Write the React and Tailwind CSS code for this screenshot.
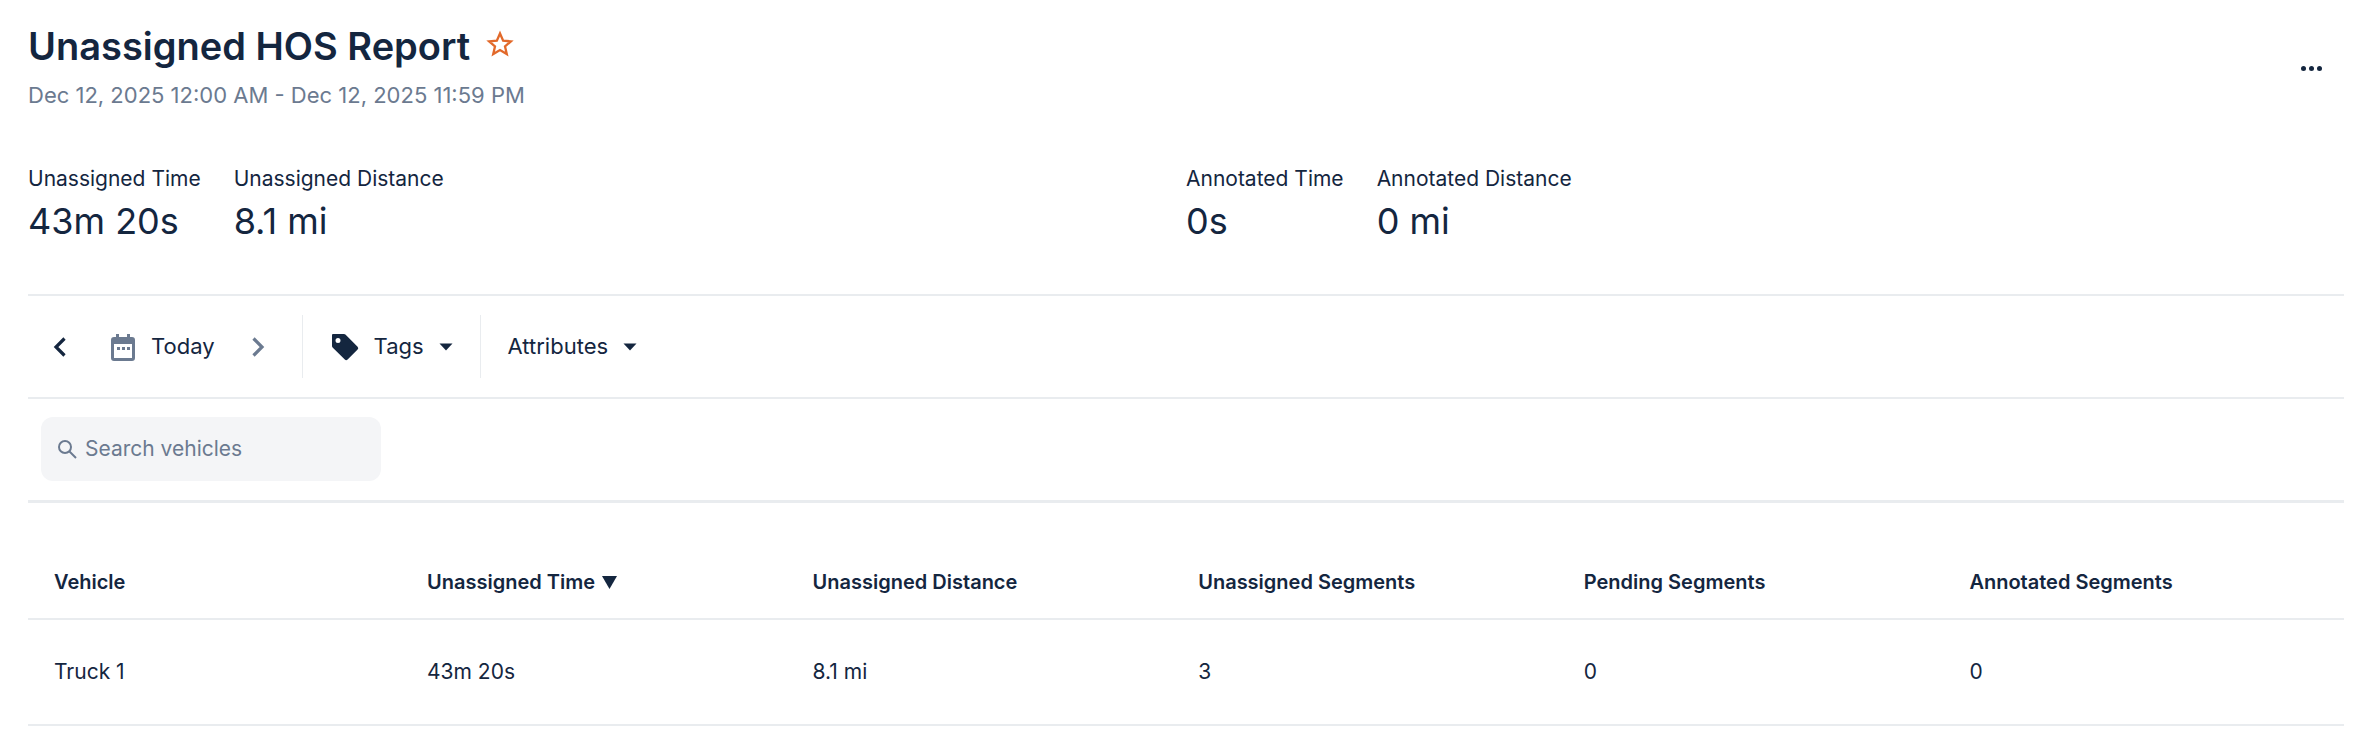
import React from "react";

const columns = [
  { label: "Vehicle", value: "Truck 1" },
  { label: "Unassigned Time", value: "43m 20s", sorted: true },
  { label: "Unassigned Distance", value: "8.1 mi" },
  { label: "Unassigned Segments", value: "3" },
  { label: "Pending Segments", value: "0" },
  { label: "Annotated Segments", value: "0" },
];

const gridCols = "grid grid-cols-[373px_repeat(4,385.6px)_1fr]";

function Stat({ label, value }) {
  return (
    <div>
      <div className="text-[21px] leading-[28px] text-[#14263f]">{label}</div>
      <div className="mt-[4px] text-[36px] leading-[48px] text-[#14263f]">{value}</div>
    </div>
  );
}

function Caret() {
  return (
    <svg width="14" height="8" viewBox="0 0 14 8" className="text-[#14263f]">
      <path d="M0.5 0.5h13L7 7.5z" fill="currentColor" />
    </svg>
  );
}

function Chevron({ dir, color }) {
  return (
    <svg width="14" height="22" viewBox="0 0 14 22" fill="none" stroke={color} strokeWidth="3.2">
      <path d={dir === "left" ? "M11.5 2.5 3 11l8.5 8.5" : "M2.5 2.5 11 11l-8.5 8.5"} />
    </svg>
  );
}

export default function App() {
  return (
    <div className="h-[732px] w-[2364px] overflow-hidden bg-white pl-[28px] pr-[20px] font-['Inter',sans-serif] text-[#14263f]">
      {/* Header */}
      <div className="flex h-[127px] items-start justify-between">
        <div>
          <div className="flex h-[46px] items-center mt-[23px]">
            <h1 className="text-[38px] font-semibold leading-[46px]">Unassigned HOS Report</h1>
            <svg width="28" height="28" viewBox="0 0 24 24" fill="none" stroke="#e2692a" strokeWidth="2" className="ml-[16px] mb-[4px]">
              <path d="M12 3l2.7 6.1 6.6.6-5 4.4 1.5 6.5L12 17.2l-5.8 3.4 1.5-6.5-5-4.4 6.6-.6z" />
            </svg>
          </div>
          <p className="mt-[11px] text-[22px] leading-[30px] text-[#6b7a90]">Dec 12, 2025 12:00 AM - Dec 12, 2025 11:59 PM</p>
        </div>
        <div className="mr-[22px] mt-[66px] flex gap-[3px]">
          <span className="size-[5px] rounded-full bg-[#14263f]" />
          <span className="size-[5px] rounded-full bg-[#14263f]" />
          <span className="size-[5px] rounded-full bg-[#14263f]" />
        </div>
      </div>

      {/* Stats */}
      <div className="grid h-[169px] grid-cols-2 items-start border-b-2 border-[#e9ecef] pt-[38px]">
        <div className="flex gap-[33px]">
          <Stat label="Unassigned Time" value="43m 20s" />
          <Stat label="Unassigned Distance" value="8.1 mi" />
        </div>
        <div className="flex gap-[33px]">
          <Stat label="Annotated Time" value="0s" />
          <Stat label="Annotated Distance" value="0 mi" />
        </div>
      </div>

      {/* Toolbar */}
      <div className="flex h-[103px] items-center border-b-2 border-[#e9ecef] text-[22px]">
        <div className="ml-[25px] flex items-center">
          <Chevron dir="left" color="#14263f" />
        </div>
        <svg width="24" height="28" viewBox="0 0 24 28" className="ml-[44px]" fill="#6b7a90">
          <path d="M5 1h3v3h8V1h3v3h2a3 3 0 0 1 3 3v18a3 3 0 0 1-3 3H3a3 3 0 0 1-3-3V7a3 3 0 0 1 3-3h2zM3 11v14h18V11z" />
          <rect x="6" y="14" width="3" height="3" />
          <rect x="11" y="14" width="3" height="3" />
          <rect x="16" y="14" width="3" height="3" />
        </svg>
        <span className="ml-[16px]">Today</span>
        <div className="ml-[36px] flex items-center">
          <Chevron dir="right" color="#6b7a90" />
        </div>
        <div className="ml-[37px] h-[63px] w-px bg-[#e9ecef]" />
        <svg width="28" height="28" viewBox="0 0 28 28" className="ml-[28px]" fill="#14263f">
          <path fillRule="evenodd" d="M2 1h11a2 2 0 0 1 1.4.6l12.2 12.2a2 2 0 0 1 0 2.8L16.6 26.6a2 2 0 0 1-2.8 0L1.6 14.4A2 2 0 0 1 1 13V2a1 1 0 0 1 1-1zm5 4a2.5 2.5 0 1 0 0 5 2.5 2.5 0 0 0 0-5z" />
        </svg>
        <span className="ml-[15px]">Tags</span>
        <span className="ml-[15px] flex"><Caret /></span>
        <div className="ml-[27px] h-[63px] w-px bg-[#e9ecef]" />
        <span className="ml-[27px]">Attributes</span>
        <span className="ml-[15px] flex"><Caret /></span>
      </div>

      {/* Search */}
      <div className="flex h-[104px] items-start border-b-[3px] border-[#e9ecef] pl-[13px] pt-[18px]">
        <div className="flex h-[64px] w-[340px] items-center rounded-[12px] bg-[#f4f5f7] pl-[16px]">
          <svg width="20" height="20" viewBox="0 0 20 20" fill="none" stroke="#6b7a90" strokeWidth="2">
            <circle cx="8" cy="8" r="6" />
            <path d="M12.5 12.5 19 19" />
          </svg>
          <span className="ml-[8px] text-[21px] text-[#6b7a90]">Search vehicles</span>
        </div>
      </div>

      {/* Table */}
      <div className={`${gridCols} mt-[44px] h-[73px] border-b-2 border-[#e9ecef]`}>
        {columns.map((c) => (
          <div key={c.label} className="flex h-[70px] items-center gap-[7px] pl-[26px] text-[20px] font-semibold">
            {c.label}
            {c.sorted && (
              <svg width="15" height="13" viewBox="0 0 15 13"><path d="M0 0h15L7.5 13z" fill="#14263f" /></svg>
            )}
          </div>
        ))}
      </div>
      <div className={`${gridCols} h-[106px] border-b-2 border-[#e9ecef]`}>
        {columns.map((c) => (
          <div key={c.label} className="flex items-center pl-[26px] text-[21px]">{c.value}</div>
        ))}
      </div>
    </div>
  );
}
